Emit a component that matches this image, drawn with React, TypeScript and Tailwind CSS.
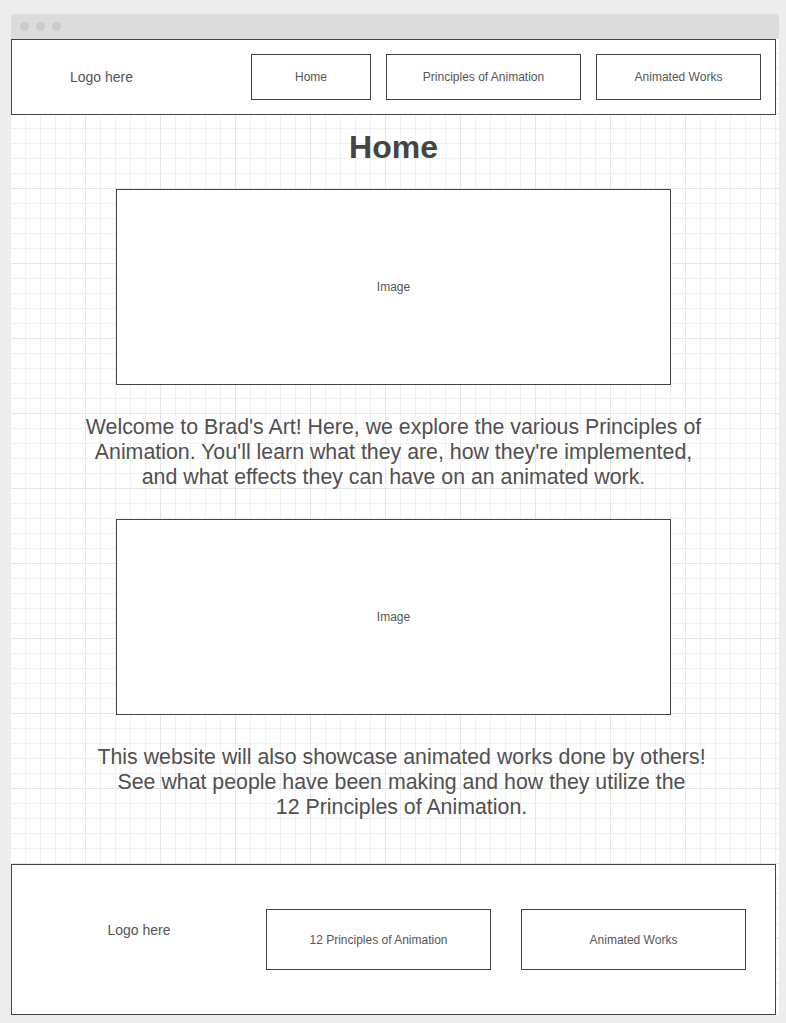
import React from "react";

const font = "font-['Liberation_Sans','Arial',sans-serif]";

function NavBox({ label, w, h }: { label: string; w: string; h: string }) {
  return (
    <div className={`${w} ${h} border border-[#444] bg-white flex items-center justify-center text-[12px] text-[#555]`}>
      {label}
    </div>
  );
}

function ImageBox() {
  return (
    <div className="mx-auto w-[555px] h-[196px] border border-[#444] bg-white flex items-center justify-center text-[12px] text-[#555]">
      Image
    </div>
  );
}

export default function App() {
  return (
    <div className={`${font} w-[786px] h-[1023px] bg-[#ededed] pt-[14px] pl-[11px] overflow-hidden`}>
      <div className="w-[768px]">
        {/* title bar */}
        <div className="h-[25px] bg-[#dcdcdc] rounded-t-[4px] flex items-center gap-[7px] pl-[9px]">
          <span className="w-[9px] h-[9px] rounded-full bg-[#cbcbcb]" />
          <span className="w-[9px] h-[9px] rounded-full bg-[#cbcbcb]" />
          <span className="w-[9px] h-[9px] rounded-full bg-[#cbcbcb]" />
        </div>
        {/* content */}
        <div className="bg-white bg-[linear-gradient(to_right,#e6e6e6_1px,transparent_1px),linear-gradient(to_bottom,#e6e6e6_1px,transparent_1px),linear-gradient(to_right,#f1f1f1_1px,transparent_1px),linear-gradient(to_bottom,#f1f1f1_1px,transparent_1px)] bg-size-[75px_75px,75px_75px,15px_15px,15px_15px] bg-position-[-1px_-1px]">
          {/* header */}
          <header className="w-[765px] h-[76px] border border-[#444] bg-white flex items-center pr-[14px]">
            <div className="w-[179px] text-center text-[14px] text-[#555]">Logo here</div>
            <div className="flex-1" />
            <div className="flex gap-[15px]">
              <NavBox label="Home" w="w-[120px]" h="h-[46px]" />
              <NavBox label="Principles of Animation" w="w-[195px]" h="h-[46px]" />
              <NavBox label="Animated Works" w="w-[165px]" h="h-[46px]" />
            </div>
          </header>
          {/* main */}
          <main className="w-[765px] h-[749px] pt-[14px]">
            <h1 className="text-center text-[32px] leading-[36px] font-bold text-[#444]">Home</h1>
            <div className="mt-[24px]">
              <ImageBox />
            </div>
            <p className="mt-[30px] text-center text-[21.33px] leading-[25px] text-[#505050]">
              Welcome to Brad's Art! Here, we explore the various Principles of
              <br />
              Animation. You'll learn what they are, how they're implemented,
              <br />
              and what effects they can have on an animated work.
            </p>
            <div className="mt-[29px]">
              <ImageBox />
            </div>
            <p className="mt-[30px] pl-[16px] text-center text-[21.33px] leading-[25px] text-[#505050]">
              This website will also showcase animated works done by others!
              <br />
              See what people have been making and how they utilize the
              <br />
              12 Principles of Animation.
            </p>
          </main>
          {/* footer */}
          <footer className="w-[765px] h-[151px] border border-[#444] bg-white flex items-center pr-[29px]">
            <div className="flex-1 text-center text-[14px] text-[#555] -mt-[19px]">Logo here</div>
            <div className="flex gap-[30px]">
              <NavBox label="12 Principles of Animation" w="w-[225px]" h="h-[61px]" />
              <NavBox label="Animated Works" w="w-[225px]" h="h-[61px]" />
            </div>
          </footer>
        </div>
      </div>
    </div>
  );
}
